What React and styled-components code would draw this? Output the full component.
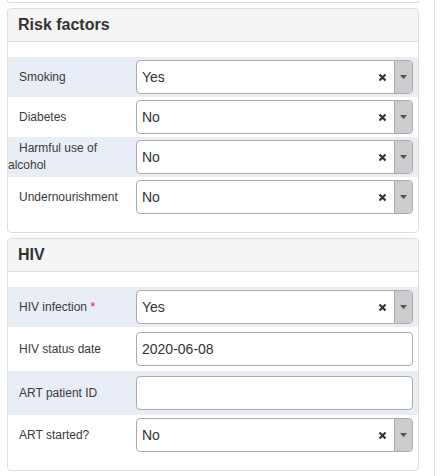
import styled, { createGlobalStyle } from "styled-components";

const Global = createGlobalStyle`
  body {
    margin: 0;
    background: #fff;
    font-family: "Liberation Sans", Arial, sans-serif;
    color: #333;
  }
`;

const Page = styled.div`
  display: flex;
  width: 441px;
  height: 476px;
  overflow: hidden;
`;
const Main = styled.div`
  width: 412px;
  padding-left: 7px;
  padding-right: 15px;
  display: flex;
  flex-direction: column;
  gap: 5px;
`;
const Side = styled.div`
  flex: 1;
  border-left: 1px solid #ddd;
`;
const PanelTail = styled.div`
  height: 2px;
  border: 1px solid #ddd;
  border-top: none;
  border-radius: 0 0 4px 4px;
`;
const Panel = styled.div`
  border: 1px solid #ddd;
  border-radius: 4px;
  background: #fff;
`;
const Heading = styled.div`
  height: 32px;
  display: flex;
  align-items: center;
  padding-left: 10px;
  background: #f5f5f5;
  border-bottom: 1px solid #ddd;
  border-radius: 3px 3px 0 0;
  font-size: 16px;
  font-weight: 700;
  color: #333;
`;
const Body = styled.div`
  padding: 15px 0 15px;
`;
const Row = styled.div`
  display: flex;
  align-items: center;
  height: ${(p) => (p.$tall ? 44 : 40)}px;
  background: ${(p) => (p.$shade ? "#e9eef6" : "transparent")};
`;
const Label = styled.div`
  width: 128px;
  font-size: 12px;
  line-height: 17px;
  text-indent: 11px;
  color: #3a3a3a;
`;
const Req = styled.span`
  color: #e02020;
`;
const Control = styled.div`
  box-sizing: border-box;
  width: 277px;
  height: 34px;
  display: flex;
  align-items: center;
  border: 1px solid #aaa;
  border-radius: 4px;
  background: #fff;
  overflow: hidden;
`;
const Value = styled.div`
  flex: 1;
  padding-left: 5px;
  font-size: 14px;
  color: #333;
`;
const Clear = styled.div`
  width: 24px;
  display: flex;
  justify-content: center;
`;
const Arrow = styled.div`
  align-self: stretch;
  width: 17px;
  border-left: 1px solid #aaa;
  background: #ccc;
  display: flex;
  align-items: center;
  justify-content: center;
`;

const Select = ({ value }) => (
  <Control>
    <Value>{value}</Value>
    <Clear>
      <svg width="9" height="9" viewBox="0 0 9 9">
        <path d="M1.5 1.5L7.5 7.5M7.5 1.5L1.5 7.5" stroke="#333" strokeWidth="2.2" />
      </svg>
    </Clear>
    <Arrow>
      <svg width="7" height="4" viewBox="0 0 7 4">
        <path d="M0 0H7L3.5 4Z" fill="#555" />
      </svg>
    </Arrow>
  </Control>
);

const Input = ({ value }) => (
  <Control>
    <Value>{value}</Value>
  </Control>
);

export default function App() {
  return (
    <>
      <Global />
      <Page>
        <Main>
          <PanelTail />
          <Panel>
            <Heading>Risk factors</Heading>
            <Body>
              <Row $shade>
                <Label>Smoking</Label>
                <Select value="Yes" />
              </Row>
              <Row>
                <Label>Diabetes</Label>
                <Select value="No" />
              </Row>
              <Row $shade>
                <Label>Harmful use of alcohol</Label>
                <Select value="No" />
              </Row>
              <Row>
                <Label>Undernourishment</Label>
                <Select value="No" />
              </Row>
            </Body>
          </Panel>
          <Panel>
            <Heading>HIV</Heading>
            <Body>
              <Row $shade>
                <Label>
                  HIV infection <Req>*</Req>
                </Label>
                <Select value="Yes" />
              </Row>
              <Row $tall>
                <Label>HIV status date</Label>
                <Input value="2020-06-08" />
              </Row>
              <Row $tall $shade>
                <Label>ART patient ID</Label>
                <Input value="" />
              </Row>
              <Row>
                <Label>ART started?</Label>
                <Select value="No" />
              </Row>
            </Body>
          </Panel>
        </Main>
        <Side />
      </Page>
    </>
  );
}
